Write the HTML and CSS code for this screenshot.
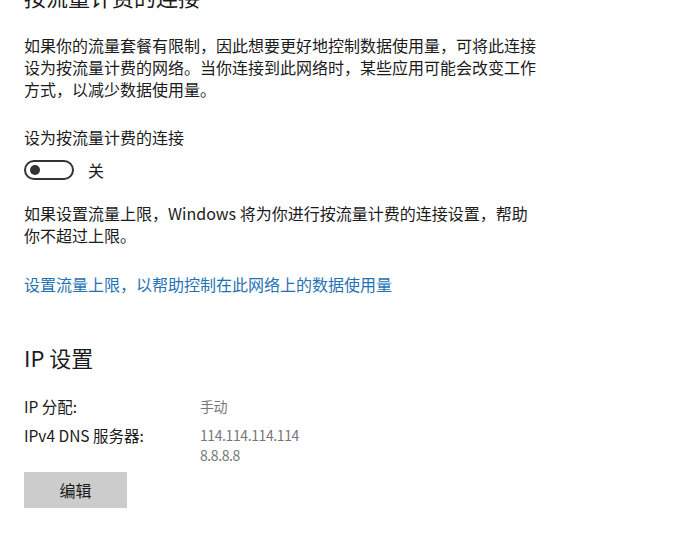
FILE: index.html
```html
<!DOCTYPE html>
<html lang="zh-CN">
<head>
    <meta charset="UTF-8">
    <title>网络设置</title>
    <link rel="stylesheet" href="styles.css">
</head>
<body>

    <div class="page">
        <h2 class="title cut">按流量计费的连接</h2>

        <p class="desc">如果你的流量套餐有限制，因此想要更好地控制数据使用量，可将此连接<br>设为按流量计费的网络。当你连接到此网络时，某些应用可能会改变工作<br>方式，以减少数据使用量。</p>

        <div class="field-label">设为按流量计费的连接</div>
        <div class="toggle-row">
            <span class="toggle"><span class="knob"></span></span>
            <span class="toggle-text">关</span>
        </div>

        <p class="desc note">如果设置流量上限，Windows 将为你进行按流量计费的连接设置，帮助<br>你不超过上限。</p>

        <a class="link" href="#">设置流量上限，以帮助控制在此网络上的数据使用量</a>

        <h2 class="title ip">IP 设置</h2>

        <div class="props">
            <div class="prop-name">IP 分配:</div>
            <div class="prop-value">手动</div>
            <div class="prop-name">IPv4 DNS 服务器:</div>
            <div class="prop-value">114.114.114.114<br>8.8.8.8</div>
        </div>

        <button class="btn">编辑</button>
    </div>

</body>
</html>
```

FILE: styles.css
```css
/* General Styles */
body {
    margin: 0;
    background: #fff;
    color: #1b1b1b;
    font-family: "Noto Sans CJK SC", "Noto Sans", sans-serif;
    overflow: hidden;
}

.page {
    display: flex;
    flex-direction: column;
    align-items: flex-start;
    padding-left: 24px;
}

.title {
    font-size: 22px;
    font-weight: 400;
    line-height: 30px;
    margin: 0;
}

/* heading scrolled partly out of view */
.cut {
    margin-top: -19px;
}

.desc {
    font-size: 16px;
    line-height: 22px;
    margin: 23px 0 0;
}

.field-label {
    font-size: 16px;
    line-height: 22px;
    margin-top: 26px;
}

.toggle-row {
    display: flex;
    align-items: center;
    gap: 14px;
    margin-top: 12px;
    height: 20px;
}

.toggle {
    box-sizing: border-box;
    width: 50px;
    height: 20px;
    border: 2px solid #333;
    border-radius: 10px;
    display: flex;
    align-items: center;
    padding-left: 4px;
}

.knob {
    width: 10px;
    height: 10px;
    border-radius: 50%;
    background: #333;
}

.toggle-text {
    font-size: 16px;
}

.note {
    margin-top: 22px;
}

.link {
    font-size: 16px;
    line-height: 22px;
    margin-top: 27px;
    color: #1f72b5;
    text-decoration: none;
}

.ip {
    margin-top: 47px;
}

.props {
    display: grid;
    grid-template-columns: 176px auto;
    row-gap: 9px;
    margin-top: 24px;
    font-size: 15.5px;
    line-height: 20px;
}

.prop-value {
    color: #777;
    font-size: 14px;
    letter-spacing: -0.4px;
}

.btn {
    margin-top: 7px;
    width: 103px;
    height: 36px;
    border: none;
    background: #ccc;
    color: #1b1b1b;
    font-family: inherit;
    font-size: 16px;
    padding: 0;
}
```
